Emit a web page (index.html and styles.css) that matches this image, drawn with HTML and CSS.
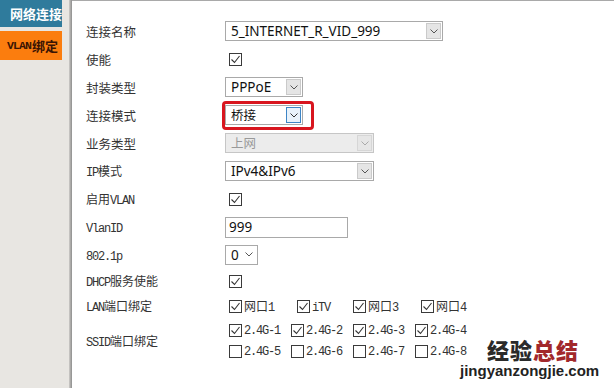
FILE: index.html
```html
<!DOCTYPE html>
<html lang="zh-CN">
<head>
<meta charset="utf-8">
<link rel="stylesheet" href="styles.css">
</head>
<body>
<div class="page">
  <aside class="side">
    <div class="tabs">
      <div class="tab tab-blue">网络连接</div>
      <div class="tab tab-orange"><span class="tlat">VLAN</span>绑定</div>
    </div>
  </aside>
  <div class="edge"></div>
  <main class="content">
    <div class="form">
      <div class="row">
        <div class="lbl ya">连接名称</div>
        <div class="sel w218"><span class="val">5_INTERNET_R_VID_999</span><span class="arr"><svg width="8" height="5" viewBox="0 0 8 5"><path d="M0.5 0.5 L4 4 L7.5 0.5" fill="none" stroke="#555" stroke-width="1"/></svg></span></div>
      </div>
      <div class="row">
        <div class="lbl ya">使能</div>
        <span class="cb on"><svg width="11" height="11" viewBox="0 0 11 11"><path d="M1.5 5.5 L4.5 8.5 L9.5 2" fill="none" stroke="#333" stroke-width="1.1"/></svg></span>
      </div>
      <div class="row">
        <div class="lbl ya">封装类型</div>
        <div class="sel w78"><span class="val">PPPoE</span><span class="arr"><svg width="8" height="5" viewBox="0 0 8 5"><path d="M0.5 0.5 L4 4 L7.5 0.5" fill="none" stroke="#555" stroke-width="1"/></svg></span></div>
      </div>
      <div class="row">
        <div class="lbl ya">连接模式</div>
        <div class="sel w78"><span class="val cjk">桥接</span><span class="arr focus"><svg width="8" height="5" viewBox="0 0 8 5"><path d="M0.5 0.5 L4 4 L7.5 0.5" fill="none" stroke="#333" stroke-width="1"/></svg></span><span class="mark"></span></div>
      </div>
      <div class="row">
        <div class="lbl ya">业务类型</div>
        <div class="sel w149 dis"><span class="val cjk">上网</span><span class="arr"><svg width="8" height="5" viewBox="0 0 8 5"><path d="M0.5 0.5 L4 4 L7.5 0.5" fill="none" stroke="#aaa" stroke-width="1"/></svg></span></div>
      </div>
      <div class="row">
        <div class="lbl ss"><span class="m">IP</span>模式</div>
        <div class="sel w149"><span class="val">IPv4&amp;IPv6</span><span class="arr"><svg width="8" height="5" viewBox="0 0 8 5"><path d="M0.5 0.5 L4 4 L7.5 0.5" fill="none" stroke="#555" stroke-width="1"/></svg></span></div>
      </div>
      <div class="row">
        <div class="lbl ss">启用<span class="m">VLAN</span></div>
        <span class="cb on"><svg width="11" height="11" viewBox="0 0 11 11"><path d="M1.5 5.5 L4.5 8.5 L9.5 2" fill="none" stroke="#333" stroke-width="1.1"/></svg></span>
      </div>
      <div class="row">
        <div class="lbl ss"><span class="m">VlanID</span></div>
        <div class="inp w123">999</div>
      </div>
      <div class="row h27">
        <div class="lbl ss"><span class="m">802.1p</span></div>
        <div class="sel w33 plain"><span class="val">0</span><span class="arr"><svg width="8" height="5" viewBox="0 0 8 5"><path d="M0.5 0.5 L4 4 L7.5 0.5" fill="none" stroke="#555" stroke-width="1"/></svg></span></div>
      </div>
      <div class="row h26">
        <div class="lbl ss"><span class="m">DHCP</span>服务使能</div>
        <span class="cb on"><svg width="11" height="11" viewBox="0 0 11 11"><path d="M1.5 5.5 L4.5 8.5 L9.5 2" fill="none" stroke="#333" stroke-width="1.1"/></svg></span>
      </div>
      <div class="row h24">
        <div class="lbl ss"><span class="m">LAN</span>端口绑定</div>
        <div class="group lan">
          <label class="opt"><span class="cb on"><svg width="11" height="11" viewBox="0 0 11 11"><path d="M1.5 5.5 L4.5 8.5 L9.5 2" fill="none" stroke="#333" stroke-width="1.1"/></svg></span><span class="ot">网口<span class="m">1</span></span></label>
          <label class="opt"><span class="cb on"><svg width="11" height="11" viewBox="0 0 11 11"><path d="M1.5 5.5 L4.5 8.5 L9.5 2" fill="none" stroke="#333" stroke-width="1.1"/></svg></span><span class="ot"><span class="m">iTV</span></span></label>
          <label class="opt"><span class="cb on"><svg width="11" height="11" viewBox="0 0 11 11"><path d="M1.5 5.5 L4.5 8.5 L9.5 2" fill="none" stroke="#333" stroke-width="1.1"/></svg></span><span class="ot">网口<span class="m">3</span></span></label>
          <label class="opt"><span class="cb on"><svg width="11" height="11" viewBox="0 0 11 11"><path d="M1.5 5.5 L4.5 8.5 L9.5 2" fill="none" stroke="#333" stroke-width="1.1"/></svg></span><span class="ot">网口<span class="m">4</span></span></label>
        </div>
      </div>
      <div class="row h46">
        <div class="lbl ss"><span class="m">SSID</span>端口绑定</div>
        <div class="ssid">
          <div class="group ss-row">
            <label class="opt"><span class="cb on"><svg width="11" height="11" viewBox="0 0 11 11"><path d="M1.5 5.5 L4.5 8.5 L9.5 2" fill="none" stroke="#333" stroke-width="1.1"/></svg></span><span class="ot m">2.4G-1</span></label>
            <label class="opt"><span class="cb on"><svg width="11" height="11" viewBox="0 0 11 11"><path d="M1.5 5.5 L4.5 8.5 L9.5 2" fill="none" stroke="#333" stroke-width="1.1"/></svg></span><span class="ot m">2.4G-2</span></label>
            <label class="opt"><span class="cb on"><svg width="11" height="11" viewBox="0 0 11 11"><path d="M1.5 5.5 L4.5 8.5 L9.5 2" fill="none" stroke="#333" stroke-width="1.1"/></svg></span><span class="ot m">2.4G-3</span></label>
            <label class="opt"><span class="cb on"><svg width="11" height="11" viewBox="0 0 11 11"><path d="M1.5 5.5 L4.5 8.5 L9.5 2" fill="none" stroke="#333" stroke-width="1.1"/></svg></span><span class="ot m">2.4G-4</span></label>
          </div>
          <div class="group ss-row">
            <label class="opt"><span class="cb"></span><span class="ot m">2.4G-5</span></label>
            <label class="opt"><span class="cb"></span><span class="ot m">2.4G-6</span></label>
            <label class="opt"><span class="cb"></span><span class="ot m">2.4G-7</span></label>
            <label class="opt"><span class="cb"></span><span class="ot m">2.4G-8</span></label>
          </div>
        </div>
      </div>
    </div>
    <div class="wm">
      <div class="wm-cn"><span class="wm-a">经验</span><span class="wm-b">总结</span></div>
      <div class="wm-en">jingyanzongjie.com</div>
    </div>
  </main>
</div>
</body>
</html>
```

FILE: styles.css
```css
* { box-sizing: border-box; margin: 0; padding: 0; }
html, body { width: 614px; height: 388px; overflow: hidden; background: #fff; }
body { font-family: "Noto Sans CJK SC", "Noto Sans", sans-serif; color: #222; }

.page { display: flex; height: 388px; }

.side { width: 69px; background: #e8e6e2; flex: none; }
.tabs { display: flex; flex-direction: column; gap: 4px; width: 62px; }
.tab { display: flex; align-items: center; font-weight: bold; font-size: 13px; white-space: nowrap; overflow: hidden; }
.tab-blue { height: 27px; background: #2f7b9c; color: #fff; padding-left: 10px; }
.tab-orange { height: 29px; background: #fb7d0e; color: #3a1404; padding-left: 7px; }
.tlat { font-family: "Liberation Mono", monospace; font-size: 11.5px; letter-spacing: -0.9px; margin-right: 1px; }

.edge { width: 3px; flex: none; background: linear-gradient(to right, #cfcdca, #a8a7a5 55%, #8e8e8e); }

.content { flex: 1; position: relative; border-top: 1px solid #a9a9a9; padding: 16px 0 0 14px; }

.row { display: flex; align-items: center; height: 28px; }
.row.h27 { height: 27px; }
.row.h26 { height: 26px; }
.row.h24 { height: 24px; }
.row.h46 { height: 46px; }

.lbl { width: 139px; flex: none; font-size: 12px; color: #333; white-space: nowrap; }
.lbl.ya { font-size: 12.5px; }
.lbl.ss { font-size: 12px; }
.m { font-family: "Liberation Mono", monospace; font-size: 12px; letter-spacing: -1.2px; }

.sel { position: relative; display: flex; align-items: center; height: 20px; border: 1px solid #a9a9a9; background: #fff; font-family: "Noto Sans", sans-serif; font-size: 13.5px; color: #111; }
.sel .val { flex: 1; padding-left: 5px; line-height: 18px; white-space: nowrap; overflow: hidden; }
.sel .val.cjk { font-family: "Noto Sans CJK SC", sans-serif; font-size: 12.5px; }
.sel .arr { width: 15px; height: 16px; margin-right: 1px; background: #e5e5e5; border: 1px solid #cacaca; display: flex; align-items: center; justify-content: center; flex: none; }
.sel .arr.focus { background: #e8f2fb; border-color: #3d85c6; }
.sel.dis { background: #ececec; border-color: #c6c6c6; color: #999; }
.sel.dis .arr { background: #e6e6e6; border-color: #d6d6d6; }
.sel.plain .arr { background: transparent; border-color: transparent; }
.mark { position: absolute; left: -4px; top: -5px; width: 92px; height: 29px; border: 3px solid #d8161f; border-radius: 4px; }

.w218 { width: 218px; }
.w149 { width: 149px; }
.w78 { width: 78px; }
.w33 { width: 33px; }
.w123 { width: 123px; }

.inp { height: 21px; border: 1px solid #a9a9a9; background: #fff; font-family: "Noto Sans", sans-serif; font-size: 13.5px; color: #111; padding-left: 3px; line-height: 19px; }

.cb { display: inline-flex; align-items: center; justify-content: center; width: 13px; height: 13px; border: 1px solid #3a3a3a; background: #fff; margin-left: 4px; flex: none; }

.group { display: flex; align-items: center; }
.opt { display: flex; align-items: center; font-size: 12px; color: #333; white-space: nowrap; }
.opt .ot { margin-left: 2px; }
.lan .opt { margin-right: 19px; }
.ss-row { height: 21px; }
.ss-row .opt { margin-right: 7px; }
.ot.m { font-size: 12px; letter-spacing: -1.2px; }

.wm { position: absolute; left: 388px; top: 336px; width: 150px; }
.wm-cn { padding-left: 27px; font-size: 22px; font-weight: 900; letter-spacing: 1px; line-height: 25px; }
.wm-a { color: #2a2a2a; }
.wm-b { color: #a2282b; }
.wm-en { font-family: "Liberation Sans", sans-serif; font-size: 15px; font-weight: bold; color: #222; line-height: 18px; }
```
